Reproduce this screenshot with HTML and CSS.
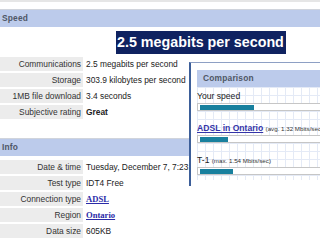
FILE: index.html
```html
<!DOCTYPE html>
<html lang="en">
<head>
    <meta charset="UTF-8">
    <title>Speed test results</title>
    <link rel="stylesheet" href="styles.css">
</head>
<body>
    <div class="topline"></div>

    <div class="block">
        <div class="block-head">Speed</div>
        <div class="headline-row">
            <span class="headline">2.5 megabits per second</span>
        </div>
        <dl class="facts">
            <dt>Communications</dt><dd>2.5 megabits per second</dd>
            <dt>Storage</dt><dd>303.9 kilobytes per second</dd>
            <dt>1MB file download</dt><dd>3.4 seconds</dd>
            <dt>Subjective rating</dt><dd><strong>Great</strong></dd>
        </dl>
    </div>

    <div class="block info">
        <div class="block-head">Info</div>
        <dl class="facts">
            <dt>Date &amp; time</dt><dd>Tuesday, December 7, 7:23:41 PM</dd>
            <dt>Test type</dt><dd>IDT4 Free</dd>
            <dt>Connection type</dt><dd><a href="#">ADSL</a></dd>
            <dt>Region</dt><dd><a href="#">Ontario</a></dd>
            <dt>Data size</dt><dd>605KB</dd>
            <dt>&nbsp;</dt><dd>&nbsp;</dd>
        </dl>
    </div>

    <div class="compare">
        <div class="block-head">Comparison</div>
        <div class="compare-body">
            <div class="cmp-item">
                <div class="cmp-label">Your speed</div>
                <div class="cmp-bar"><div class="cmp-fill" style="width: 54px"></div></div>
            </div>
            <div class="cmp-item">
                <div class="cmp-label"><a href="#">ADSL in Ontario</a> <small>(avg. 1.32 Mbits/sec)</small></div>
                <div class="cmp-bar"><div class="cmp-fill" style="width: 28px"></div></div>
            </div>
            <div class="cmp-item">
                <div class="cmp-label">T-1 <small>(max. 1.54 Mbits/sec)</small></div>
                <div class="cmp-bar"><div class="cmp-fill" style="width: 33px"></div></div>
            </div>
        </div>
    </div>
</body>
</html>
```

FILE: styles.css
```css
html, body {
    overflow: hidden;
}
body {
    margin: 0;
    position: relative;
    font-family: "Liberation Sans", Arial, sans-serif;
    font-size: 8.4px;
    color: #222;
    background: #fff;
}
.topline {
    height: 2px;
    background: #e6e6e6;
}
.block {
    margin-top: 7px;
}
.block.info {
    margin-top: 19px;
}
.block-head {
    height: 17px;
    line-height: 17px;
    border-top: 1px solid #d0d4dc;
    background: #bccbeb;
    color: #4f5766;
    font-weight: bold;
    padding-left: 2px;
    letter-spacing: 0.2px;
}
.headline-row {
    padding: 4px 0 0 116px;
}
.headline {
    display: inline-block;
    width: 170px;
    box-sizing: border-box;
    padding-left: 1px;
    line-height: 23px;
    background: #0f2260;
    color: #fff;
    font-size: 14.3px;
    font-weight: bold;
    white-space: nowrap;
}
.facts {
    display: grid;
    grid-template-columns: 83px 1fr;
    row-gap: 2px;
    margin: 3px 0 0;
}
.info .facts {
    margin-top: 4px;
}
.facts dt {
    background: #ececec;
    text-align: right;
    padding-right: 2px;
    line-height: 14px;
    color: #333;
}
.facts dd {
    margin: 0;
    padding-left: 3px;
    line-height: 14px;
    white-space: nowrap;
}
.facts a {
    font-family: "Liberation Serif", "Times New Roman", serif;
    font-weight: bold;
    font-size: 8.6px;
    color: #2a2aa8;
}
.compare {
    position: absolute;
    left: 189px;
    top: 62px;
    width: 150px;
    height: 116px;
    padding: 7px 0 0 6px;
    background: #fff;
    border-top: 1px solid #8ea0c4;
    border-left: 2px solid #3d5f99;
}
.compare .block-head {
    border-top: none;
    padding-left: 6px;
}
.compare-body {
    height: 93px;
    padding-top: 4px;
    box-sizing: border-box;
    background-color: #fff;
    background-image:
        linear-gradient(to right, #e4eaf6 1px, transparent 1px),
        linear-gradient(to bottom, #e4eaf6 1px, transparent 1px);
    background-size: 8px 8px;
}
.cmp-item + .cmp-item {
    margin-top: 12px;
}
.cmp-label {
    line-height: 11px;
    font-size: 8.6px;
    white-space: nowrap;
}
.cmp-label a {
    color: #3434a8;
    font-weight: bold;
}
.cmp-label small {
    font-size: 6.2px;
    color: #333;
}
.cmp-bar {
    margin-top: 1px;
    height: 8px;
    box-sizing: border-box;
    border: 1px solid #c6c6c6;
    background: #fff;
    padding: 1px 0 0 2px;
}
.cmp-fill {
    height: 5px;
    background: #18809e;
}
```
